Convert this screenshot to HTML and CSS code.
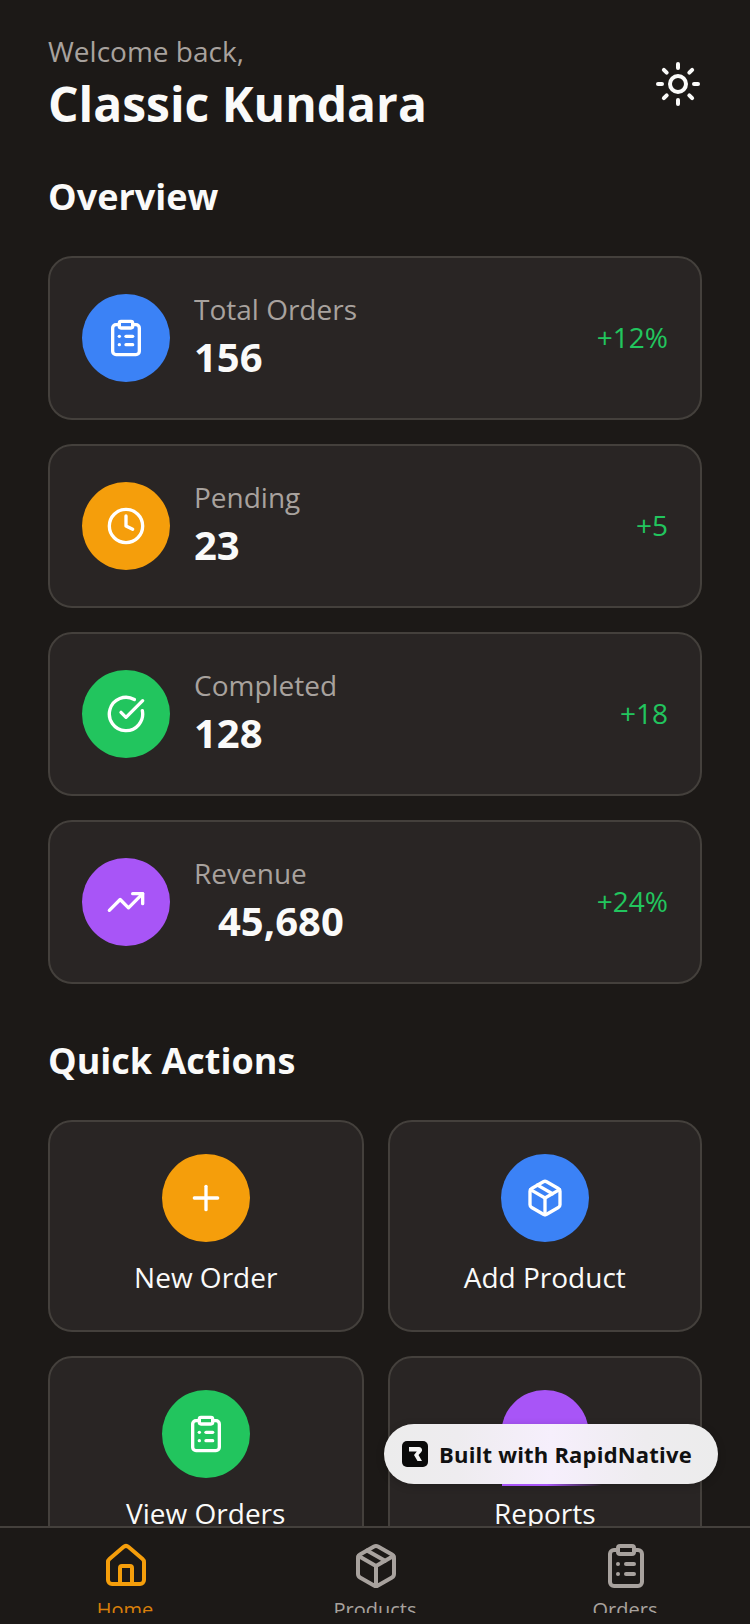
FILE: index.html
```html
<!DOCTYPE html>
<html lang="en">
<head>
  <meta charset="UTF-8" />
  <title>Classic Kundara</title>
  <link rel="stylesheet" href="styles.css">
</head>
<body>
  <div class="screen">
    <div class="content">
      <div class="header">
        <div>
          <div class="welcome">Welcome back,</div>
          <div class="name">Classic Kundara</div>
        </div>
        <svg class="icon sun" viewBox="0 0 24 24"><circle cx="12" cy="12" r="4"/><path d="M12 2v2"/><path d="M12 20v2"/><path d="m4.93 4.93 1.41 1.41"/><path d="m17.66 17.66 1.41 1.41"/><path d="M2 12h2"/><path d="M20 12h2"/><path d="m6.34 17.66-1.41 1.41"/><path d="m19.07 4.93-1.41 1.41"/></svg>
      </div>

      <div class="section-title">Overview</div>
      <div class="stat-list">
        <div class="stat-card">
          <div class="circle blue">
            <svg class="icon" viewBox="0 0 24 24"><rect width="8" height="4" x="8" y="2" rx="1" ry="1"/><path d="M16 4h2a2 2 0 0 1 2 2v14a2 2 0 0 1-2 2H6a2 2 0 0 1-2-2V6a2 2 0 0 1 2-2h2"/><path d="M12 11h4"/><path d="M12 16h4"/><path d="M8 11h.01"/><path d="M8 16h.01"/></svg>
          </div>
          <div class="stat-text">
            <div class="stat-label">Total Orders</div>
            <div class="stat-value">156</div>
          </div>
          <div class="stat-change">+12%</div>
        </div>
        <div class="stat-card">
          <div class="circle orange">
            <svg class="icon" viewBox="0 0 24 24"><circle cx="12" cy="12" r="10"/><polyline points="12 6 12 12 16 14"/></svg>
          </div>
          <div class="stat-text">
            <div class="stat-label">Pending</div>
            <div class="stat-value">23</div>
          </div>
          <div class="stat-change">+5</div>
        </div>
        <div class="stat-card">
          <div class="circle green">
            <svg class="icon" viewBox="0 0 24 24"><path d="M21.801 10A10 10 0 1 1 17 3.335"/><path d="m9 11 3 3L22 4"/></svg>
          </div>
          <div class="stat-text">
            <div class="stat-label">Completed</div>
            <div class="stat-value">128</div>
          </div>
          <div class="stat-change">+18</div>
        </div>
        <div class="stat-card">
          <div class="circle purple">
            <svg class="icon" viewBox="0 0 24 24"><polyline points="22 7 13.5 15.5 8.5 10.5 2 17"/><polyline points="16 7 22 7 22 13"/></svg>
          </div>
          <div class="stat-text">
            <div class="stat-label">Revenue</div>
            <div class="stat-value indent">45,680</div>
          </div>
          <div class="stat-change">+24%</div>
        </div>
      </div>

      <div class="section-title quick">Quick Actions</div>
      <div class="action-grid">
        <div class="action-card">
          <div class="circle orange">
            <svg class="icon" viewBox="0 0 24 24"><path d="M5 12h14"/><path d="M12 5v14"/></svg>
          </div>
          <div class="action-label">New Order</div>
        </div>
        <div class="action-card">
          <div class="circle blue">
            <svg class="icon" viewBox="0 0 24 24"><path d="M11 21.73a2 2 0 0 0 2 0l7-4A2 2 0 0 0 21 16V8a2 2 0 0 0-1-1.73l-7-4a2 2 0 0 0-2 0l-7 4A2 2 0 0 0 3 8v8a2 2 0 0 0 1 1.73z"/><path d="M12 22V12"/><path d="m3.3 7 8.7 5 8.7-5"/><path d="m7.5 4.27 9 5.15"/></svg>
          </div>
          <div class="action-label">Add Product</div>
        </div>
        <div class="action-card">
          <div class="circle green">
            <svg class="icon" viewBox="0 0 24 24"><rect width="8" height="4" x="8" y="2" rx="1" ry="1"/><path d="M16 4h2a2 2 0 0 1 2 2v14a2 2 0 0 1-2 2H6a2 2 0 0 1-2-2V6a2 2 0 0 1 2-2h2"/><path d="M12 11h4"/><path d="M12 16h4"/><path d="M8 11h.01"/><path d="M8 16h.01"/></svg>
          </div>
          <div class="action-label">View Orders</div>
        </div>
        <div class="action-card">
          <div class="circle purple"></div>
          <div class="action-label">Reports</div>
        </div>
      </div>
    </div>

    <div class="tab-bar">
      <div class="tab active">
        <svg class="tab-icon" viewBox="0 0 24 24"><path d="M15 21v-8a1 1 0 0 0-1-1h-4a1 1 0 0 0-1 1v8"/><path d="M3 10a2 2 0 0 1 .709-1.528l7-5.999a2 2 0 0 1 2.582 0l7 5.999A2 2 0 0 1 21 10v9a2 2 0 0 1-2 2H5a2 2 0 0 1-2-2z"/></svg>
        <div class="tab-label">Home</div>
      </div>
      <div class="tab">
        <svg class="tab-icon" viewBox="0 0 24 24"><path d="M11 21.73a2 2 0 0 0 2 0l7-4A2 2 0 0 0 21 16V8a2 2 0 0 0-1-1.73l-7-4a2 2 0 0 0-2 0l-7 4A2 2 0 0 0 3 8v8a2 2 0 0 0 1 1.73z"/><path d="M12 22V12"/><path d="m3.3 7 8.7 5 8.7-5"/><path d="m7.5 4.27 9 5.15"/></svg>
        <div class="tab-label">Products</div>
      </div>
      <div class="tab">
        <svg class="tab-icon" viewBox="0 0 24 24"><rect width="8" height="4" x="8" y="2" rx="1" ry="1"/><path d="M16 4h2a2 2 0 0 1 2 2v14a2 2 0 0 1-2 2H6a2 2 0 0 1-2-2V6a2 2 0 0 1 2-2h2"/><path d="M12 11h4"/><path d="M12 16h4"/><path d="M8 11h.01"/><path d="M8 16h.01"/></svg>
        <div class="tab-label">Orders</div>
      </div>
    </div>

    <div class="built-badge">
      <svg class="built-logo" viewBox="0 0 26 26"><rect width="26" height="26" rx="5" fill="#0a0a0a"/><path d="M7 6h10a3 3 0 0 1 2.3 5l-2.800 3 3.500 6h-4.500l-3.500-6 2.800-3.500H7z" fill="#f5f5f5"/></svg>
      <span>Built with RapidNative</span>
    </div>
  </div>
</body>
</html>
```

FILE: styles.css
```css
body {
  margin: 0;
  background: #1c1917;
  font-family: "Open Sans", Arial, sans-serif;
  color: #fafaf9;
}
.screen {
  width: 750px;
  height: 1624px;
  display: flex;
  flex-direction: column;
  overflow: hidden;
  position: relative;
}
.content {
  flex: 1;
  min-height: 0;
  overflow: hidden;
  padding: 32px 48px 0;
}
.header {
  display: flex;
  align-items: center;
  justify-content: space-between;
  margin-bottom: 32px;
}
.welcome {
  font-size: 28px;
  line-height: 38px;
  margin-bottom: 2px;
  color: #a8a29e;
}
.name {
  font-size: 48px;
  line-height: 64px;
  font-weight: 700;
}
.icon {
  width: 40px;
  height: 40px;
  fill: none;
  stroke: #fff;
  stroke-width: 2;
  stroke-linecap: round;
  stroke-linejoin: round;
}
.sun {
  width: 48px;
  height: 48px;
  stroke: #fafaf9;
}
.section-title {
  font-size: 36px;
  line-height: 56px;
  font-weight: 700;
  padding-top: 1px;
  margin-bottom: 31px;
}
.section-title.quick {
  margin-top: 48px;
}
.stat-list {
  display: flex;
  flex-direction: column;
  gap: 24px;
}
.stat-card {
  display: flex;
  align-items: center;
  gap: 24px;
  padding: 32px;
  background: #292524;
  border: 2px solid #44403c;
  border-radius: 24px;
}
.circle {
  width: 88px;
  height: 88px;
  border-radius: 50%;
  display: flex;
  align-items: center;
  justify-content: center;
  flex-shrink: 0;
}
.blue { background: #3b82f6; }
.orange { background: #f59e0b; }
.green { background: #22c55e; }
.purple { background: #a855f7; }
.stat-text {
  flex: 1;
  margin-top: -1px;
  margin-bottom: 1px;
}
.stat-label {
  font-size: 28px;
  line-height: 40px;
  color: #a8a29e;
}
.stat-value {
  font-size: 40px;
  line-height: 56px;
  font-weight: 700;
}
.stat-value.indent {
  padding-left: 24px;
}
.stat-change {
  font-size: 28px;
  line-height: 40px;
  margin-bottom: 2px;
  color: #22c55e;
}
.action-grid {
  display: grid;
  grid-template-columns: 315.5px 314.5px;
  gap: 24px;
}
.action-card {
  display: flex;
  flex-direction: column;
  align-items: center;
  gap: 15px;
  padding: 32px 32px 33px;
  background: #292524;
  border: 2px solid #44403c;
  border-radius: 24px;
}
.action-label {
  font-size: 28px;
  line-height: 40px;
}
.tab-bar {
  height: 96px;
  flex-shrink: 0;
  display: grid;
  grid-template-columns: repeat(3, 1fr);
  background: #1c1917;
  border-top: 2px solid #44403c;
}
.tab {
  height: 85px;
  overflow: hidden;
  display: flex;
  flex-direction: column;
  align-items: center;
  padding-top: 14px;
  box-sizing: border-box;
  color: #a8a29e;
}
.tab.active {
  color: #f59e0b;
}
.tab-icon {
  width: 48px;
  height: 48px;
  flex-shrink: 0;
  margin-left: 2px;
  fill: none;
  stroke: currentColor;
  stroke-width: 2;
  stroke-linecap: round;
  stroke-linejoin: round;
}
.tab-label {
  font-size: 20px;
  line-height: 28px;
  margin-top: 6px;
}
.tab.active .tab-label {
  color: #d97f0a;
}
.built-badge {
  position: absolute;
  left: 384px;
  top: 1424px;
  width: 334px;
  height: 60px;
  box-sizing: border-box;
  padding-left: 18px;
  display: flex;
  align-items: center;
  gap: 11px;
  border-radius: 30px;
  background: linear-gradient(90deg, #ececec 0%, #eeecef 22%, #f6effc 50%, #eeecef 78%, #ececec 100%);
  box-shadow: 0 2px 8px rgba(0, 0, 0, 0.2);
  font-size: 22px;
  font-weight: 700;
  letter-spacing: 0.2px;
  color: #111;
}
.built-badge::after {
  content: "";
  position: absolute;
  left: 118px;
  top: 60px;
  width: 100px;
  height: 2px;
  background: linear-gradient(90deg, #a855f7 0%, #a855f7 45%, transparent 100%);
}
.built-logo {
  width: 26px;
  height: 26px;
}
```
